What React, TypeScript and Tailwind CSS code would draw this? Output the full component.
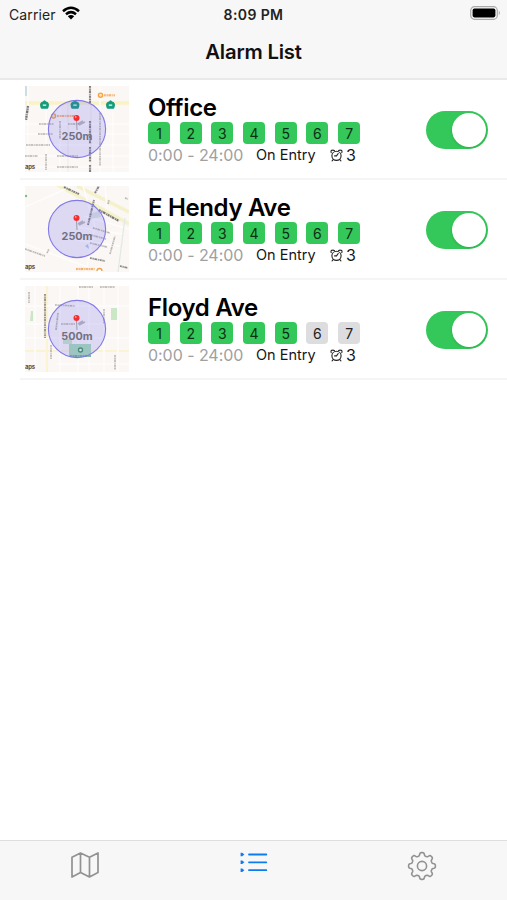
import React, { useState } from 'react';

// Types
type MapKind = 'office' | 'hendy' | 'floyd';

interface Alarm {
  id: MapKind;
  name: string;
  radius: string;
  days: number[];
  hours: string;
  trigger: string;
  repeat: number;
}

interface LabelProps {
  d: string;
  color?: string;
  width?: number;
}

// Constants
const WEEK = [1, 2, 3, 4, 5, 6, 7];

const ALARMS: Alarm[] = [
  { id: 'office', name: 'Office', radius: '250m', days: WEEK, hours: '0:00 - 24:00', trigger: 'On Entry', repeat: 3 },
  { id: 'hendy', name: 'E Hendy Ave', radius: '250m', days: WEEK, hours: '0:00 - 24:00', trigger: 'On Entry', repeat: 3 },
  { id: 'floyd', name: 'Floyd Ave', radius: '500m', days: [1, 2, 3, 4, 5], hours: '0:00 - 24:00', trigger: 'On Entry', repeat: 3 },
];

// Outline of an eight-toothed gear centred on (15, 15)
const GEAR_PATH = `M${Array.from({ length: 144 }, (_, i) => {
  const angle = (i / 144) * Math.PI * 2;
  const r = 11.9 + 1.55 * Math.tanh(2 * Math.cos(8 * angle));
  return `${(15 + r * Math.sin(angle)).toFixed(2)} ${(15 - r * Math.cos(angle)).toFixed(2)}`;
}).join('L')}Z`;

// Street names are too small to read on a thumbnail, so they are a faint band with a broken core
const StreetLabel: React.FC<LabelProps> = ({ d, color = '#a5a19d', width = 1.5 }) => (
  <g stroke={color} fill="none">
    <path d={d} strokeWidth={width + 0.4} opacity=".2" />
    <path d={d} strokeWidth={width} strokeDasharray="1.7 1 1.1 .8 2.5 1.3 .9 .8" opacity=".7" />
  </g>
);

const OfficeMap = () => (
  <>
    <path d="M0 17H104" stroke="#fbf2c4" strokeWidth="3.5" />
    <path d="M0 38H104M0 48H104M0 59H104M0 70H104M0 81H104M21 18V86M35 18V86M75 0V86M88 18V86M3 0V86" stroke="#fefdfb" strokeWidth="1.3" />
    <path d="M66 18V86M43 18V86" stroke="#efebe8" strokeWidth="1" />
    <StreetLabel d="M14 38H29M13 48H28M1 59H25M0 70H13M32 70H53M32 81H53M43 38H54" />
    <StreetLabel d="M65 0V17M65 35V58M65 61V76M65 79V86" color="#58555c" width={1.9} />
    <StreetLabel d="M75 27V80M21 68V84M35 35V53" />
    <StreetLabel d="M3 20L1 34" color="#45464a" width={2.2} />
    <path d="M1 0V10" stroke="#bcd5de" strokeWidth="1.5" />
    {[19.5, 50, 85.5].map((x) => (
      <g key={x}>
        <path d={`M${x - 3} 22q-1.6-3.8.2-5.2q1.8-.3 2.8-1.8q1 1.5 2.8 1.8q1.8 1.4.2 5.2z`} fill="#169b7c" stroke="#169b7c" strokeWidth="1.4" strokeLinejoin="round" />
        <path d={`M${x - 1.7} 19.2h3.4`} stroke="#b5e6d8" strokeWidth="1.7" />
      </g>
    ))}
    <circle cx="75.5" cy="9.3" r="2.1" fill="#fde3be" stroke="#f5a13b" strokeWidth="1.3" />
    <circle cx="28.5" cy="30" r="2.1" fill="#fde3be" stroke="#f5a13b" strokeWidth="1.3" />
    <StreetLabel d="M79 9.3H90M32 30H50" color="#f3a04e" width={2} />
  </>
);

const HendyMap = () => (
  <>
    <path d="M31-2L104 38M52 0L104 26" stroke="#f5f1cb" strokeWidth="3.5" />
    <path d="M0 58L76 86M51 41L98 48M51 54L95 60M58 0L70 40L61 86M0 21L45 1M80 0L82 23M59 30L104 43" stroke="#fefdfb" strokeWidth="1.5" />
    <path d="M100 32L93 86" stroke="#dfe9e6" strokeWidth="1.2" />
    <path d="M64 28l10-3 2 6-11 2z" fill="#dce5dc" />
    <StreetLabel d="M39 1Q47 5 54 8" color="#55544c" width={1.9} />
    <StreetLabel d="M74 24L94 35" color="#4d4c44" width={2} />
    <StreetLabel d="M63 39L69 14M70 7L74 0" color="#5b5965" width={1.8} />
    <StreetLabel d="M68 42L85 47M66 49L81 53M65 57L82 61M0 63L20 70M100 12L103 13" />
    <StreetLabel d="M65 72L80 75M95 80L103 82" color="#66645e" />
    <StreetLabel d="M85 68L90 50M83 18L84 14M22 67L24 63" />
    <StreetLabel d="M51 83H70" color="#ee9b3f" width={2.2} />
    <path d="M72 85a2.5 2.5 0 015 0" fill="#fff" stroke="#efa54c" strokeWidth="1.3" />
    <path d="M60 60l3-2 1 5z" fill="#aacee0" />
    <circle cx="1" cy="10" r="1.2" fill="#76bd83" />
  </>
);

const FloydMap = () => (
  <>
    <path d="M22 0V86M0 65H104" stroke="#faf4d4" strokeWidth="2.2" />
    <path d="M0 20H104M0 38H80M0 52H104M10 0V86M35 0V86M53 0V86M64 0V86M79 0V86M93 0V86M32 78H104" stroke="#fefdfb" strokeWidth="1.5" />
    <path d="M6 25h2v10H5zM86 22h6v12h-6zM38 53h9v5h-9z" fill="#cbe7c5" />
    <path d="M44 58h22v13H44z" fill="#a9dcb4" />
    <StreetLabel d="M20 8V52" color="#7d7762" width={1.9} />
    <StreetLabel d="M30 19L50 20M54 1H68M75 1H90M36 38H50" />
    <StreetLabel d="M4 6V17M33 27L31 44M26 59V73M79 23V38M90 69V84" />
    <StreetLabel d="M45 70H66" color="#4f8f86" width={1.6} />
    <circle cx="55.5" cy="64" r="2" fill="#effaef" stroke="#3c9558" strokeWidth="1.3" />
  </>
);

const MAPS: Record<MapKind, React.FC> = { office: OfficeMap, hendy: HendyMap, floyd: FloydMap };

const MapThumbnail: React.FC<{ kind: MapKind; radius: string }> = ({ kind, radius }) => {
  const Streets = MAPS[kind];

  return (
    <svg viewBox="0 0 104 86" className="h-[86px] w-[104px] shrink-0 overflow-hidden bg-[#faf7f4]" fill="none">
      <Streets />
      <text x="0" y="82.5" className="fill-[#55534f] font-['Inter'] text-[6px] font-bold tracking-[-0.3px]">aps</text>
      <circle cx="52" cy="43" r="28.6" fill="#6b62ee" fillOpacity=".2" stroke="#8279e8" strokeWidth="1.1" />
      <path d="M53 38L58 35M54 39L60 36" stroke="#77748f" strokeWidth="1.6" opacity=".5" />
      <path d="M51.5 34L52 44" stroke="#9b9aac" strokeWidth="1" />
      <circle cx="51.5" cy="32" r="3" fill="#f32d32" />
      <circle cx="50.7" cy="31" r=".9" fill="#ff9a91" />
      <text x="52" y="53.7" textAnchor="middle" className="fill-[#727080] font-['Inter'] text-[10.8px] font-bold">
        {radius}
      </text>
    </svg>
  );
};

const AlarmIcon = () => (
  <svg viewBox="0 0 13 13" className="h-[13px] w-[13px]" fill="none" stroke="#222" strokeWidth="1.1" strokeLinecap="round">
    <circle cx="6.5" cy="6.8" r="4.6" />
    <path d="M6.5 6.9H4.6M6.5 6.9L8.2 4.5M3.2 10.7L2.1 11.9M9.8 10.7L10.9 11.9M1.2 3.7Q.4 1.2 2.6 1.1Q3.7 1 4.5 1.7M11.8 3.7Q12.6 1.2 10.4 1.1Q9.3 1 8.5 1.7" />
  </svg>
);

const StatusBar = () => (
  <div className="flex h-7 items-center justify-between pr-[6px] pl-[9px] text-[14px] text-[#222]">
    <div className="flex w-[150px] items-center gap-[6px]">
      <span className="tracking-[0.12px]">Carrier</span>
      <svg viewBox="0 0 18 14" className="-mt-[2px] h-[14px] w-[18px]" fill="none" stroke="#000" strokeWidth="2.5">
        <path d="M1 5.2Q9-1.6 17 5.2M4 8.2Q9 4 14 8.2" />
        <path d="M5.8 10.2Q9 7.6 12.2 10.2L9 13.5z" fill="#000" stroke="none" />
      </svg>
    </div>
    <span className="-ml-[3px] text-[14px] font-semibold tracking-[0.4px]">8:09 PM</span>
    <div className="flex w-[150px] justify-end">
      <svg viewBox="0 0 31 14" className="-mt-[2px] h-[14px] w-[31px]">
        <rect x=".7" y=".7" width="26.6" height="12.6" rx="3.8" fill="#f7f7f7" stroke="#aaa" strokeWidth="1.2" />
        <rect x="2.6" y="2.6" width="22.8" height="8.8" rx="1.8" fill="#000" />
        <path d="M28.8 4.8Q31 7 28.8 9.2z" fill="#aaa" />
      </svg>
    </div>
  </div>
);

const AlarmRow: React.FC<{ alarm: Alarm }> = ({ alarm }) => {
  const [enabled, setEnabled] = useState(true);

  return (
    <li className="ml-5 flex h-[100px] border-b-2 border-[#f5f5f5] pt-[6px] pr-[19px] pl-[5px]">
      <MapThumbnail kind={alarm.id} radius={alarm.radius} />
      <div className="ml-[19px] flex-1 pt-[7px]">
        <h2 className="h-[29px] text-[24px] leading-[29px] font-semibold tracking-[-0.35px] text-black">{alarm.name}</h2>
        <div className="flex gap-[9.7px]">
          {WEEK.map((day) => (
            <span
              key={day}
              className={`flex h-[22px] w-[22px] items-center justify-center rounded-[4px] text-[14px] ${
                alarm.days.includes(day) ? 'bg-[#34c759] text-[#0b3015]' : 'bg-[#dddddf] text-[#222]'
              }`}
            >
              {day}
            </span>
          ))}
        </div>
        <div className="flex h-[22px] items-center text-[#161616]">
          <span className="w-[108px] text-[16px] tracking-[-0.05px] whitespace-nowrap text-[#a0a0a0]">{alarm.hours}</span>
          <span className="w-[74px] text-[14.5px] whitespace-nowrap">{alarm.trigger}</span>
          <AlarmIcon />
          <span className="ml-[3px] text-[16px]">{alarm.repeat}</span>
        </div>
      </div>
      <button
        role="switch"
        aria-checked={enabled}
        aria-label={alarm.name}
        onClick={() => setEnabled(!enabled)}
        className={`mt-[24.5px] flex h-[38px] w-[62px] items-center rounded-full p-[2px] ${
          enabled ? 'justify-end bg-[#34c759]' : 'bg-[#e5e5ea]'
        }`}
      >
        <span className="h-[34px] w-[34px] rounded-full bg-white shadow-sm" />
      </button>
    </li>
  );
};

const TabBar = () => (
  <nav className="grid h-[60px] grid-cols-3 justify-items-center border-t border-[#dedede] bg-[#f7f7f7] pt-[10px]">
    <button aria-label="Map" className="h-[30px]">
      <svg viewBox="0 0 30 30" className="h-[30px] w-[30px]" fill="none" stroke="#929292" strokeWidth="1.7" strokeLinejoin="round">
        <path d="M2 6.2L10.5 2L19.5 6.2L28 2V21.5L19.5 26L10.5 21.5L2 26zM10.5 2V21.5M19.5 6.2V26" />
      </svg>
    </button>
    <button aria-label="Alarms" className="h-[30px]">
      <svg viewBox="0 0 30 30" className="h-[30px] w-[30px]" fill="none" stroke="#0f7bf0" strokeWidth="1.8" strokeLinecap="round">
        <path d="M10 3.5H27.3M10 11.3H27.3M10 19.2H27.3" />
        <path d="M1.6 1.8h1.6l2.2 1.7-2.2 1.7H1.6zM1.6 9.6h1.6l2.2 1.7L3.2 13H1.6zM1.6 17.5h1.6l2.2 1.7-2.2 1.7H1.6z" fill="#0f7bf0" stroke="none" />
      </svg>
    </button>
    <button aria-label="Settings" className="mr-[2px] h-[30px]">
      <svg viewBox="0 0 30 30" className="h-[30px] w-[30px]" fill="none" stroke="#929292" strokeWidth="1.6" strokeLinejoin="round">
        <path d={GEAR_PATH} />
        <circle cx="15" cy="15" r="4.6" />
      </svg>
    </button>
  </nav>
);

export default function App() {
  return (
    <div className="flex h-screen flex-col bg-white font-['Inter','Liberation_Sans',sans-serif]">
      <header className="h-20 shrink-0 border-b-2 border-[#e9e9e9] bg-[#f7f7f7]">
        <StatusBar />
        <h1 className="pt-[9px] text-center text-[20.3px] leading-[30px] font-semibold tracking-[-0.2px] text-[#111]">
          Alarm List
        </h1>
      </header>
      <main className="flex-1">
        <ul>
          {ALARMS.map((alarm) => (
            <AlarmRow key={alarm.id} alarm={alarm} />
          ))}
        </ul>
      </main>
      <TabBar />
    </div>
  );
}
